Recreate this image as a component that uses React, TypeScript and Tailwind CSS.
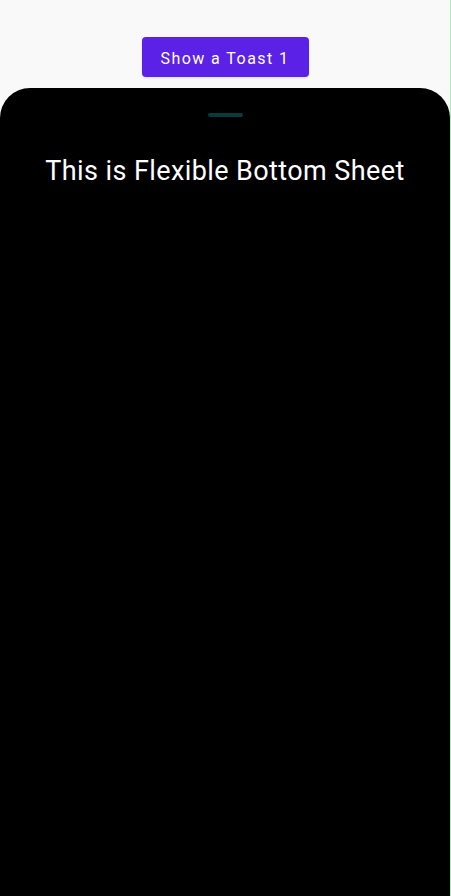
import React from 'react';

function App() {
  return (
    <div className="h-[896px] w-[451px] overflow-hidden bg-[#f9f9f9] flex flex-col border-r border-[#a8f0b8]" style={{ fontFamily: 'Roboto, "Open Sans", sans-serif' }}>
      {/* Top button */}
      <div className="flex justify-center pt-[37px] pb-[11px]">
        <button className="h-[40px] w-[167px] pt-[3px] rounded-[4px] bg-[#5b21e6] text-white text-[16px] tracking-[0.09em] shadow-sm">
          Show a Toast 1
        </button>
      </div>

      {/* Bottom sheet */}
      <div className="flex-1 bg-black rounded-t-[30px] flex flex-col items-center">
        <div className="mt-[25px] h-[4px] w-[35px] rounded-full bg-[#0b3a3a]" />
        <h1 className="mt-[37px] text-white text-[27px] leading-[34px] tracking-[0.015em]">
          This is Flexible Bottom Sheet
        </h1>
      </div>
    </div>
  );
}

export default App;
